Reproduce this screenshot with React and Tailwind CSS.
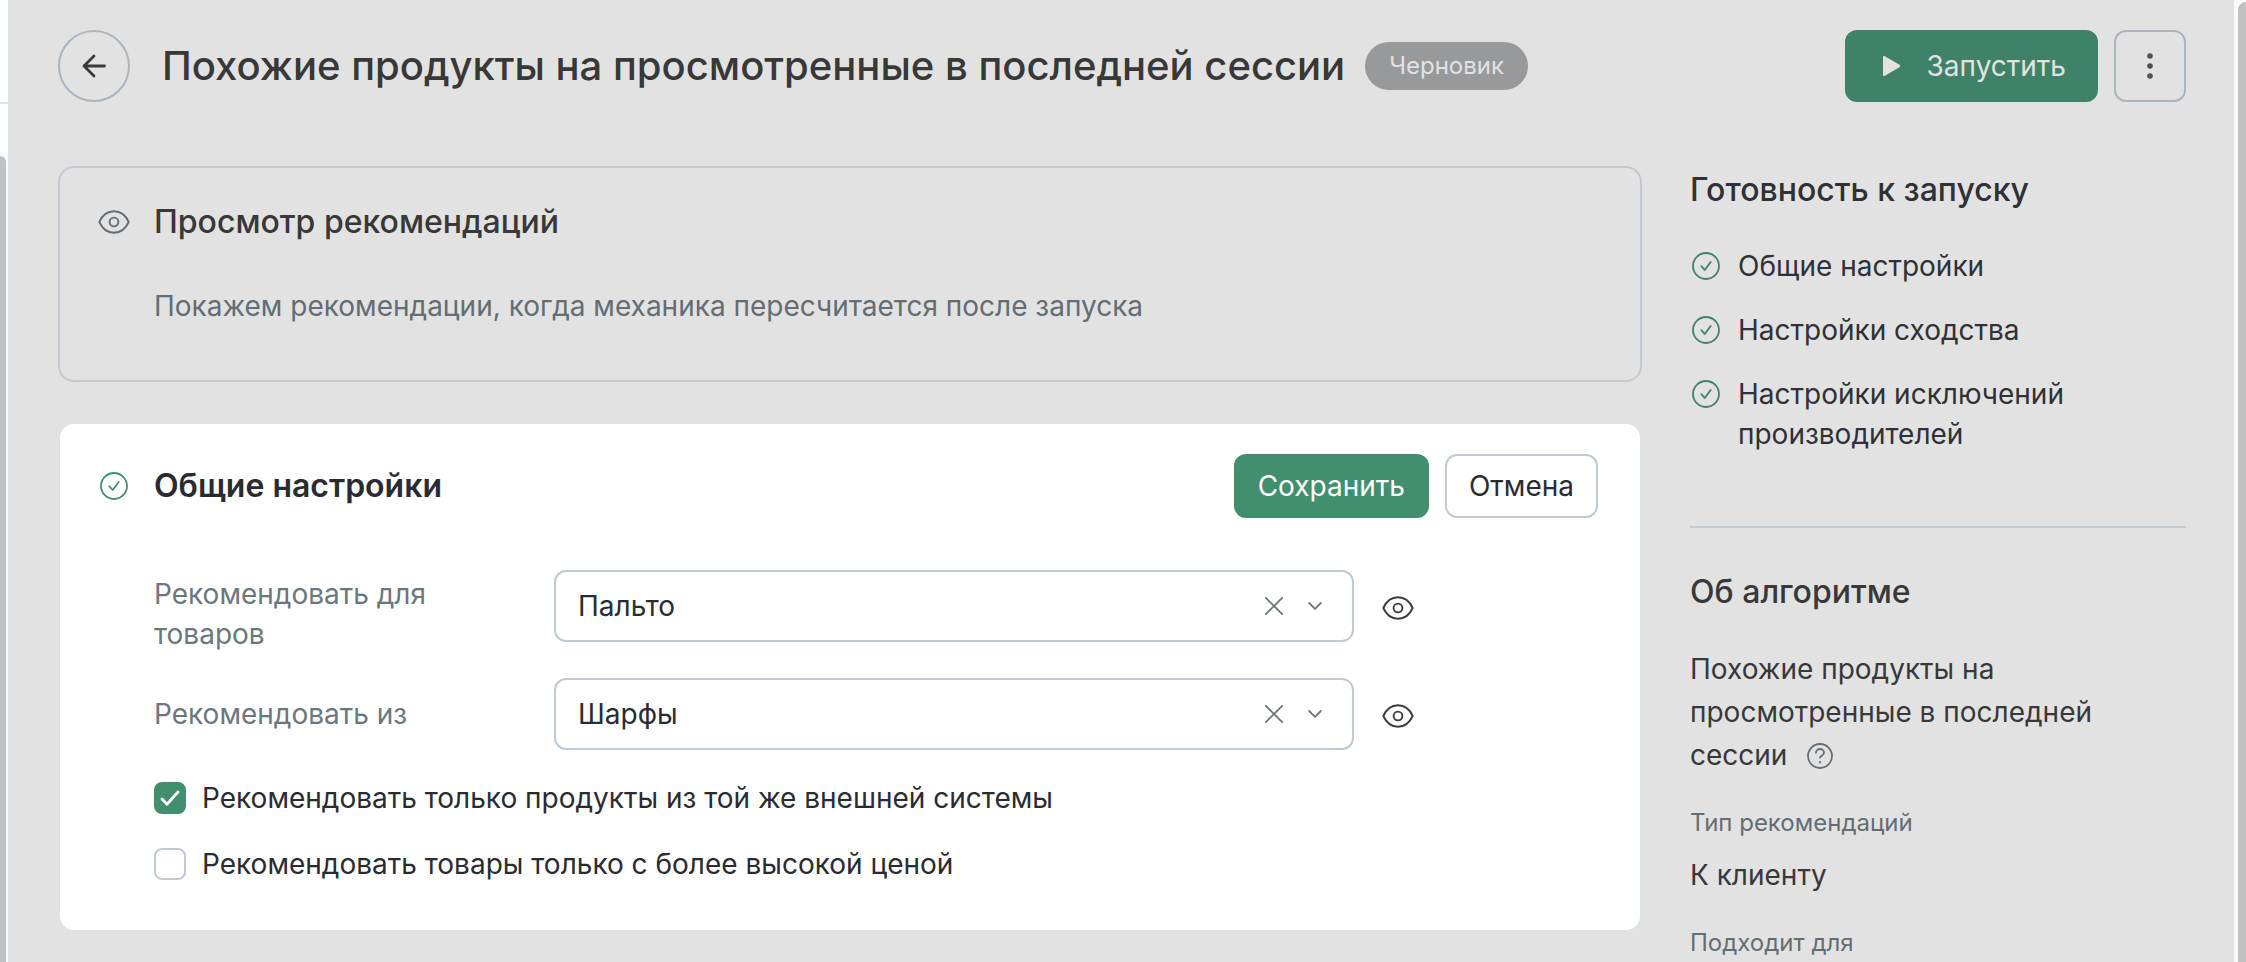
import { useState } from "react";

function EyeIcon({ className }) {
  return (
    <svg viewBox="0 0 32 24" fill="none" stroke="currentColor" strokeWidth="1.9" strokeLinejoin="round" className={className}>
      <path d="M1.300 12C4.600 4.800 9.800 1.300 16 1.300S27.400 4.800 30.700 12C27.400 19.200 22.200 22.700 16 22.700S4.600 19.200 1.300 12Z" />
      <circle cx="16" cy="12" r="4.400" />
    </svg>
  )
}

function CheckCircle({ className }) {
  return (
    <svg viewBox="0 0 28 28" fill="none" stroke="currentColor" strokeWidth="1.8" className={className}>
      <circle cx="14" cy="14" r="13" />
      <path d="M9.300 14.200l3.400 3.800L18.700 10" strokeLinecap="round" strokeLinejoin="round" />
    </svg>
  )
}

function SelectRow({ id, label, options }) {
  const [value, setValue] = useState(options[0]);
  return (
    <div className="flex items-start">
      <label htmlFor={id} className="flex min-h-[72px] w-[400px] shrink-0 items-center py-1 pr-24 text-[#6b777d]">
        {label}
      </label>
      <div className="relative max-w-[800px] grow">
        <select
          id={id}
          value={value}
          onChange={(e) => setValue(e.target.value)}
          className="block h-[72px] w-full appearance-none rounded-xl border-2 border-[#bfcad4] bg-white pl-[22px] pr-28 text-[#2a2b30]"
        >
          <option value=""></option>
          {options.map((o) => <option key={o} value={o}>{o}</option>)}
        </select>
        <button type="button" aria-label="Очистить" onClick={() => setValue("")} className="absolute right-[70px] top-[26px] text-[#6b777d]">
          <svg viewBox="0 0 20 20" fill="none" stroke="currentColor" strokeWidth="1.8" strokeLinecap="round" className="h-5 w-5">
            <path d="M1.800 1.800l16.400 16.400M18.200 1.800L1.800 18.200" />
          </svg>
        </button>
        <svg viewBox="0 0 14 10" fill="none" stroke="currentColor" strokeWidth="1.8" strokeLinecap="round" strokeLinejoin="round" className="pointer-events-none absolute right-8 top-[31px] h-[10px] w-[14px] text-[#6b777d]">
          <path d="M1.200 2l5.800 5.800L12.800 2" />
        </svg>
      </div>
      <button type="button" aria-label="Посмотреть" className="ml-7 flex h-[76px] items-center text-[#3a3b40]">
        <EyeIcon className="h-6 w-8" />
      </button>
    </div>
  )
}

function Checkbox({ label, defaultChecked }) {
  return (
    <label className="flex items-center gap-4 self-start text-[#2a2b30]">
      <span className="grid">
        <input
          type="checkbox"
          defaultChecked={defaultChecked}
          className="peer col-start-1 row-start-1 h-8 w-8 appearance-none rounded-lg border-2 border-[#bfcad4] bg-white checked:border-[#418f6e] checked:bg-[#418f6e]"
        />
        <svg viewBox="0 0 32 32" fill="none" stroke="white" strokeWidth="2.8" strokeLinecap="round" strokeLinejoin="round" className="pointer-events-none invisible col-start-1 row-start-1 h-8 w-8 peer-checked:visible">
          <path d="M8 17l5 5.200L24 10" />
        </svg>
      </span>
      {label}
    </label>
  )
}

const steps = [
  "Общие настройки",
  "Настройки сходства",
  "Настройки исключений производителей",
];

export default function App() {
  return (
    <div className="flex h-screen overflow-hidden bg-[#e2e2e2] font-[Inter,'Noto_Sans',sans-serif] text-[28px] leading-10 text-[#383838]">

      {/* edge of the side menu with its scrollbar */}
      <div className="flex w-[10px] shrink-0 flex-col border-r-2 border-[#dde3e7] bg-white">
        <div className="h-[104px] shrink-0 border-b-2 border-[#dde3e7]" />
        <div className="h-12 shrink-0" />
        <div className="grow bg-[#fafafa] pr-[2px] pt-1">
          <div className="h-full rounded-tr-lg bg-[#c1c1c1]" />
        </div>
      </div>

      <div className="min-w-0 grow px-12 pt-[30px]">
        <header className="flex items-center">
          <button type="button" aria-label="Назад" className="flex h-[72px] w-[72px] shrink-0 items-center justify-center rounded-full border-2 border-[#abb5bf] text-[#38383d]">
            <svg viewBox="0 0 26 24" fill="none" stroke="currentColor" strokeWidth="2.8" strokeLinecap="round" strokeLinejoin="round" className="h-6 w-[26px]">
              <path d="M13 2L3 12l10 10M3 12H23.500" />
            </svg>
          </button>
          <h1 className="ml-8 text-[40px] font-medium leading-[48px]">
            Похожие продукты на просмотренные в последней сессии
          </h1>
          <span className="ml-5 flex h-12 items-center rounded-full bg-[#98999b] px-6 text-2xl text-[#e2e2e2]">
            Черновик
          </span>
          <div className="ml-auto flex shrink-0 gap-4">
            <button type="button" className="flex h-[72px] items-center gap-[26px] rounded-xl bg-[#3f8267] pl-9 pr-8 text-[#e2e2e2]">
              <svg viewBox="0 0 20 22" fill="currentColor" className="h-[22px] w-5">
                <path d="M2 2.200v17.600c0 1.100 1 1.600 1.900 1L18.500 12.200c.9-.600.900-1.800 0-2.400L3.900 1.200C3 .600 2 1.100 2 2.200Z" />
              </svg>
              Запустить
            </button>
            <button type="button" aria-label="Ещё" className="flex h-[72px] w-[72px] items-center justify-center rounded-xl border-2 border-[#abb5bf]">
              <svg viewBox="0 0 6 28" fill="#505154" className="h-7 w-[6px]">
                <circle cx="3" cy="4" r="2.800" />
                <circle cx="3" cy="14" r="2.800" />
                <circle cx="3" cy="24" r="2.800" />
              </svg>
            </button>
          </div>
        </header>

        <div className="mt-16 flex items-start gap-12">
          <main className="flex min-w-0 grow flex-col gap-10">
            <section className="rounded-2xl border-2 border-[#c3c9cf] px-[38px] pb-[54px] pt-[34px]">
              <div className="flex items-center gap-6">
                <EyeIcon className="h-6 w-8 text-[#636d73]" />
                <h2 className="text-[32px] font-medium">Просмотр рекомендаций</h2>
              </div>
              <p className="mt-11 pl-14 text-[#636d73]">
                Покажем рекомендации, когда механика пересчитается после запуска
              </p>
            </section>

            <section className="rounded-2xl border-2 border-[#dde3e7] bg-white pb-[46px] pl-[38px] pr-[42px] pt-[30px]">
              <div className="flex items-center gap-4">
                <div className="flex w-8 justify-center text-[#418f6e]">
                  <CheckCircle className="h-7 w-7" />
                </div>
                <h2 className="ml-2 grow text-[32px] font-semibold text-[#2a2b30]">Общие настройки</h2>
                <button type="button" className="h-16 rounded-xl bg-[#418f6e] px-6 text-white">Сохранить</button>
                <button type="button" className="h-16 rounded-xl border-2 border-[#bfcad4] px-[22px] text-[#2a2b30]">Отмена</button>
              </div>

              <form className="mt-[52px] pl-14">
                <div className="flex flex-col gap-5">
                  <SelectRow id="for" label="Рекомендовать для товаров" options={["Пальто"]} />
                  <SelectRow id="from" label="Рекомендовать из" options={["Шарфы"]} />
                </div>
                <div className="mt-6 flex flex-col gap-[26px]">
                  <Checkbox label="Рекомендовать только продукты из той же внешней системы" defaultChecked />
                  <Checkbox label="Рекомендовать товары только с более высокой ценой" />
                </div>
              </form>
            </section>
          </main>

          <aside className="w-[496px] shrink-0 pt-1">
            <h2 className="text-[32px] font-medium text-[#303036]">Готовность к запуску</h2>
            <ul className="mt-9 flex flex-col gap-6 text-[#303036]">
              {steps.map((s) => (
                <li key={s} className="flex items-start gap-4">
                  <CheckCircle className="m-[2px] mt-[6px] h-7 w-7 shrink-0 text-[#418266]" />
                  {s}
                </li>
              ))}
            </ul>
            <hr className="mt-[72px] border-t-2 border-[#c3c9cf]" />
            <h2 className="mt-11 text-[32px] font-medium">Об алгоритме</h2>
            <p className="mt-9 leading-[43px]">
              Похожие продукты на просмотренные в последней сессии
              <button type="button" aria-label="Подсказка" className="ml-5 align-[-4px] text-[#636d73]">
                <svg viewBox="0 0 26 26" fill="none" stroke="currentColor" strokeWidth="1.8" strokeLinecap="round" className="h-[26px] w-[26px]">
                  <circle cx="13" cy="13" r="12" />
                  <path d="M9 9.800C9 7.600 10.800 6 13 6s4 1.600 4 3.700c0 2.600-3.600 2.700-4 5" />
                  <circle cx="13" cy="19.200" r=".4" />
                </svg>
              </button>
            </p>
            <dl>
              <dt className="mt-[30px] text-2xl leading-8 text-[#636d73]">Тип рекомендаций</dt>
              <dd className="mt-4">К клиенту</dd>
              <dt className="mt-8 text-2xl leading-8 text-[#636d73]">Подходит для</dt>
            </dl>
          </aside>
        </div>
      </div>

      {/* page scrollbar */}
      <div className="w-3 shrink-0 bg-[#fafafa] pl-1 pt-[2px]">
        <div className="h-full rounded-tl-lg bg-[#c1c1c1]" />
      </div>
    </div>
  )
}
